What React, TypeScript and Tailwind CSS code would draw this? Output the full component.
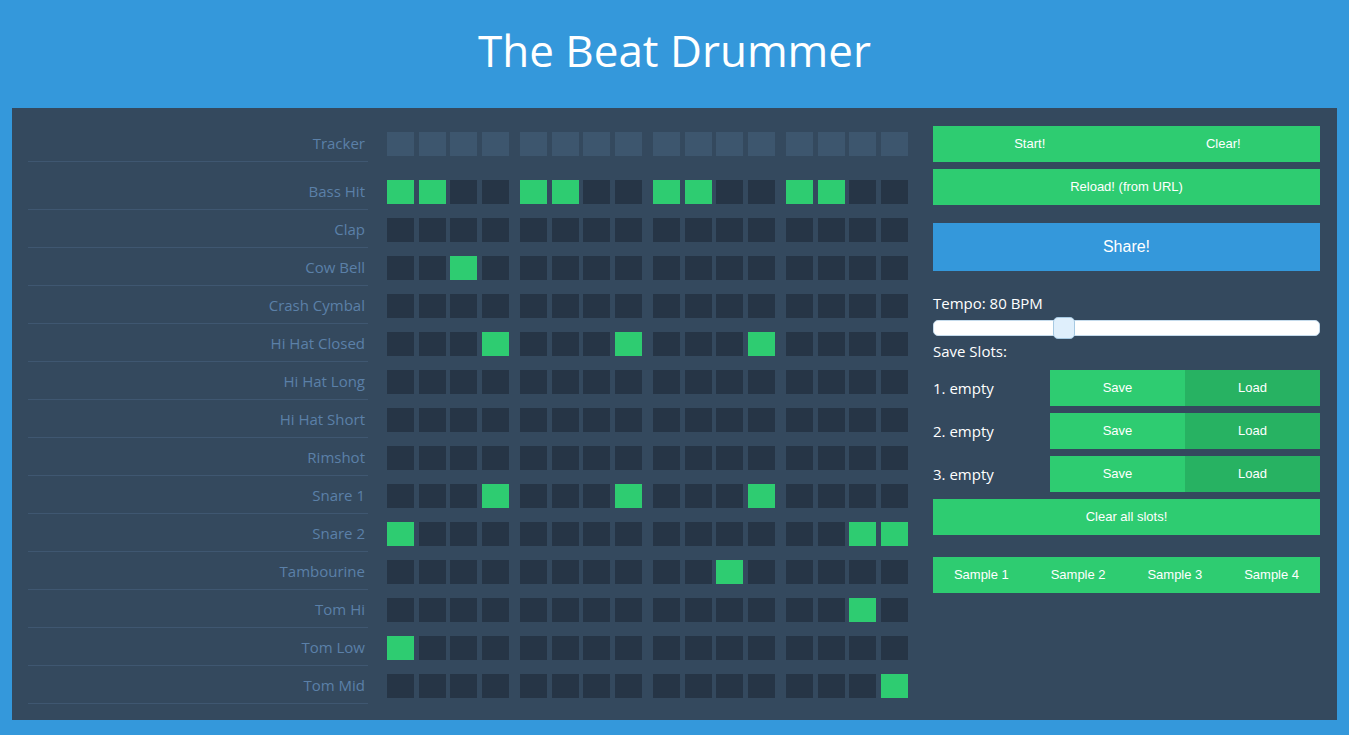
import React from 'react';

const LABEL_FONT = { fontFamily: '"Open Sans", "Noto Sans", sans-serif' };
const BTN_FONT = { fontFamily: '"Liberation Sans", Arial, sans-serif' };

const instruments: { name: string; on: number[] }[] = [
    { name: 'Bass Hit', on: [0, 1, 4, 5, 8, 9, 12, 13] },
    { name: 'Clap', on: [] },
    { name: 'Cow Bell', on: [2] },
    { name: 'Crash Cymbal', on: [] },
    { name: 'Hi Hat Closed', on: [3, 7, 11] },
    { name: 'Hi Hat Long', on: [] },
    { name: 'Hi Hat Short', on: [] },
    { name: 'Rimshot', on: [] },
    { name: 'Snare 1', on: [3, 7, 11] },
    { name: 'Snare 2', on: [0, 14, 15] },
    { name: 'Tambourine', on: [10] },
    { name: 'Tom Hi', on: [14] },
    { name: 'Tom Low', on: [0] },
    { name: 'Tom Mid', on: [15] },
];

const Steps = ({ on, tracker }: { on: number[]; tracker?: boolean }) => (
    <div className="flex gap-[11px] ml-[19px] mt-[1px]">
        {[0, 1, 2, 3].map((g) => (
            <div key={g} className="grid grid-cols-4 gap-[4.67px] w-[122px]">
                {[0, 1, 2, 3].map((i) => {
                    const step = g * 4 + i;
                    const cls = tracker
                        ? 'bg-[#3d566e]'
                        : on.includes(step)
                        ? 'bg-[#2ecc71]'
                        : 'bg-[#263546]';
                    return <div key={i} className={`h-[24px] ${cls}`} />;
                })}
            </div>
        ))}
    </div>
);

const Row = ({ label, on, tracker }: { label: string; on: number[]; tracker?: boolean }) => (
    <div className="flex items-center h-[38px]">
        <div
            className="w-[340px] h-full flex items-center justify-end pr-[3px] pt-[1px] border-b border-[#3f5771] text-[15px] text-[#5b80a8]"
            style={LABEL_FONT}
        >
            {label}
        </div>
        <Steps on={on} tracker={tracker} />
    </div>
);

const GreenBtn = ({ children, className = '' }: { children: React.ReactNode; className?: string }) => (
    <div
        className={`h-[36px] flex items-center justify-center bg-[#2ecc71] text-white text-[13px] ${className}`}
        style={BTN_FONT}
    >
        {children}
    </div>
);

export default function App() {
    return (
        <div className="min-h-[735px] bg-[#3498db] pb-[15px]">
            <header className="h-[108px] flex items-center justify-center">
                <h1 className="text-white text-[44px] -mt-[8px]" style={LABEL_FONT}>
                    The Beat Drummer
                </h1>
            </header>

            <main className="mx-[12px] h-[612px] bg-[#34495e] flex pl-[16px] pr-[17px] pt-[16px]">
                {/* Sequencer */}
                <div className="flex flex-col">
                    <Row label="Tracker" on={[]} tracker />
                    <div className="h-[10px]" />
                    {instruments.map((ins) => (
                        <Row key={ins.name} label={ins.name} on={ins.on} />
                    ))}
                </div>

                {/* Controls */}
                <div className="ml-[25px] w-[387px] pt-[2px] flex flex-col">
                    <div className="grid grid-cols-2 h-[36px] bg-[#2ecc71] text-white text-[13px]" style={BTN_FONT}>
                        <div className="flex items-center justify-center">Start!</div>
                        <div className="flex items-center justify-center">Clear!</div>
                    </div>
                    <GreenBtn className="mt-[7px]">Reload! (from URL)</GreenBtn>
                    <div
                        className="mt-[18px] h-[48px] flex items-center justify-center bg-[#3498db] text-white text-[16px]"
                        style={BTN_FONT}
                    >
                        Share!
                    </div>

                    <div className="mt-[22px] text-white text-[15px] leading-[20px]" style={LABEL_FONT}>
                        Tempo: 80 BPM
                    </div>
                    <div className="relative mt-[7px] h-[16px] bg-white border border-[#c5dbec] rounded-[5px]">
                        <div className="absolute left-[119px] -top-[4px] w-[22px] h-[22px] bg-[#dfeffc] border border-[#a6c9e2] rounded-[5px]" />
                    </div>
                    <div className="mt-[5px] text-white text-[15px] leading-[20px]" style={LABEL_FONT}>
                        Save Slots:
                    </div>

                    <div className="mt-[9px] flex flex-col gap-[7px]">
                        {[1, 2, 3].map((n) => (
                            <div key={n} className="flex items-center h-[36px]">
                                <div className="w-[117px] text-white text-[15px]" style={LABEL_FONT}>
                                    {n}. empty
                                </div>
                                <div className="flex-1 grid grid-cols-2 h-full text-white text-[13px]" style={BTN_FONT}>
                                    <div className="flex items-center justify-center bg-[#2ecc71]">Save</div>
                                    <div className="flex items-center justify-center bg-[#27b262]">Load</div>
                                </div>
                            </div>
                        ))}
                        <GreenBtn>Clear all slots!</GreenBtn>
                    </div>

                    <div className="mt-[22px] grid grid-cols-4 h-[36px] bg-[#2ecc71] text-white text-[13px]" style={BTN_FONT}>
                        {[1, 2, 3, 4].map((n) => (
                            <div key={n} className="flex items-center justify-center">
                                Sample {n}
                            </div>
                        ))}
                    </div>
                </div>
            </main>
        </div>
    );
}
